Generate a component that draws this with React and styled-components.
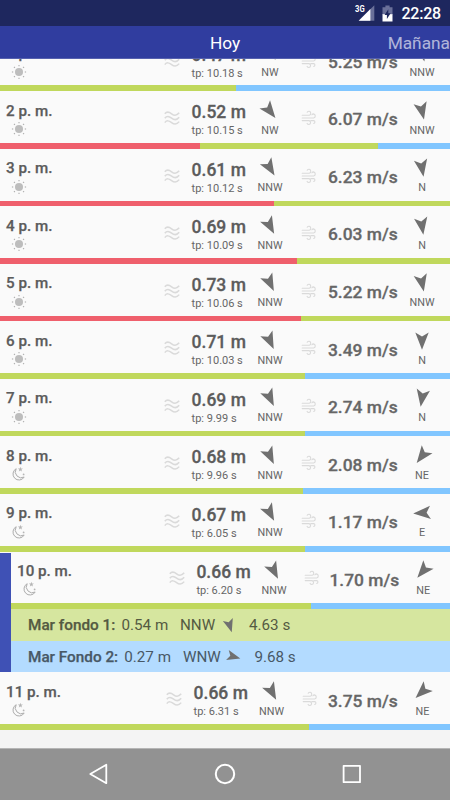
import styled, { createGlobalStyle, css } from "styled-components";

const theme = {
    status: '#1e275e',
    header: '#303d9f',
    select: '#3f51b5',
    row: '#fafafa',
    red: '#ef5f6c',
    green: '#c0d85c',
    blue: '#81c6ff',
    font1: '#5c5c5c',
    font2: '#666666',
    icon: '#bdbdbd',
    iconLight: '#dadada',
}

const GlobalStyle = createGlobalStyle`
* { box-sizing: border-box; }
body {
margin: 0;
font-family: Roboto, "Noto Sans", sans-serif;
background: #f4f4f4;
overflow: hidden;
}
svg { display: block; flex-shrink: 0; }
`
const Screen = styled.div`
width: 450px;
height: 800px;
display: flex;
flex-direction: column;
background: #f4f4f4;
overflow: hidden;
`
const StatusBar = styled.div`
height: 26px;
flex-shrink: 0;
background: ${theme.status};
display: flex;
align-items: center;
justify-content: flex-end;
padding-right: 9px;
color: #ffffff;
`
const Clock = styled.div`
font-size: 16px;
font-weight: 500;
line-height: 26px;
margin: 2px 0 0 8px;
letter-spacing: -0.2px;
`
const Header = styled.div`
height: 32.5px;
flex-shrink: 0;
background: ${theme.header};
border-bottom: 1px solid #5661ae;
display: grid;
grid-template-columns: 177px 96px 177px;
align-items: center;
color: #ffffff;
font-size: 17.3px;
line-height: 28px;
`
const Tab = styled.div`
grid-column: ${props => props.$active ? 2 : 3};
text-align: ${props => props.$active ? 'center' : 'right'};
opacity: ${props => props.$active ? 1 : 0.62};
padding-top: 3px;
white-space: nowrap;
`
const List = styled.div`
flex: 1;
min-height: 0;
overflow: hidden;
`
const FirstOffset = styled.div`
margin-top: -24.9px;
`
const Item = styled.div`
height: 57.55px;
display: flex;
flex-direction: column;
background: ${theme.row};
`
const Cells = styled.div`
flex: 1;
display: grid;
grid-template-columns: ${props => props.$cols};
`
const Col = styled.div`
display: flex;
flex-direction: column;
align-items: ${props => props.$center ? 'center' : 'flex-start'};
padding-top: ${props => props.$top ?? 0}px;
`
const Time = styled.div`
font-size: 15.2px;
font-weight: 500;
-webkit-text-stroke: 0.25px ${theme.font1};
line-height: 18px;
color: ${theme.font1};
white-space: nowrap;
`
const SkyBox = styled.div`
margin: 0.5px 0 0 3.7px;
`
const Height = styled.div`
font-size: 17.5px;
font-weight: 500;
-webkit-text-stroke: 0.3px ${theme.font1};
line-height: 20px;
color: ${theme.font1};
white-space: nowrap;
`
const Period = styled.div`
font-size: 11px;
line-height: 13px;
margin-top: 2px;
color: ${theme.font2};
white-space: nowrap;
`
const Speed = styled.div`
font-size: 17.4px;
font-weight: 500;
-webkit-text-stroke: 0.3px ${theme.font2};
line-height: 20px;
padding-left: 4px;
color: ${theme.font2};
white-space: nowrap;
`
const Direction = styled.div`
font-size: 10.8px;
line-height: 13px;
color: ${theme.font2};
margin-top: 3px;
`
const Bar = styled.div`
display: flex;
height: 5.75px;
flex-shrink: 0;
`
const Segment = styled.div`
background: ${props => theme[props.$color]};
${props => props.$width ? css`width: ${props.$width}px;` : css`flex: 1;`}
`
const Selected = styled.div`
border-left: 11px solid ${theme.select};
margin-top: 1.9px;
`
const SelectedItem = styled(Item)`
height: 55.65px;
`
const Gap = styled.div`
background: ${theme.row};
overflow: hidden;
`
const Swell = styled.div`
height: 31.7px;
display: grid;
grid-template-columns: ${props => props.$cols};
align-items: center;
padding: 1px 0 0 17px;
background: ${props => props.$color};
font-size: 15.3px;
white-space: nowrap;
`
const SwellName = styled.div`
font-weight: 500;
-webkit-text-stroke: 0.25px ${props => props.$color};
color: ${props => props.$color};
`
const SwellText = styled.div`
font-size: 15.2px;
font-weight: 400;
color: ${props => props.$color};
`
const NavBar = styled.div`
height: 52.5px;
flex-shrink: 0;
background: #929292;
border-top: 1px solid #b5b5b5;
display: grid;
grid-template-columns: 127px 127px 127px;
justify-content: center;
align-items: center;
justify-items: center;
`

const Arrow = ({ deg, size = 20 }) => (
    <svg width={size} height={size} viewBox="-10 -10 20 20" overflow="visible">
        <path d="M0 8.8 L-6.7 -8.5 L0 -4.6 L6.7 -8.5 Z" fill="#707070" transform={`rotate(${deg})`} />
    </svg>
)
const Waves = () => (
    <svg width="16" height="14" viewBox="0 0 16 14" fill="none" stroke={theme.iconLight} strokeWidth="1.5">
        {[2.8, 7.2, 11.6].map(y => (
            <path key={y} d={`M0.8 ${y} C2.8 ${y - 2.6} 5 ${y - 2} 7.6 ${y} S12.8 ${y + 2} 15.2 ${y - 1}`} />
        ))}
    </svg>
)
const WindIcon = () => (
    <svg width="16" height="16" viewBox="0 0 16 16" fill="none" stroke={theme.iconLight} strokeWidth="1.1" strokeLinecap="round">
        <path d="M1.2 5.2 H8.2 A2 2 0 0 0 8.2 1.3 Q6.8 1.2 6.2 2.2" />
        <path d="M1.2 8 H12.6 A2.1 2.1 0 0 0 12.6 3.9 Q11.4 3.9 10.9 4.8" />
        <path d="M9.8 10.6 H12.8 A1.5 1.5 0 0 1 12.8 13.5" />
        <path d="M1.2 10.6 H8 A2 2 0 0 1 8 14.5 Q6.6 14.5 6.1 13.4" />
    </svg>
)
const Sun = () => (
    <svg width="18" height="18" viewBox="-9 -9 18 18">
        <circle r="4" fill={theme.icon} />
        {[0, 45, 90, 135, 180, 225, 270, 315].map(a => (
            <path key={a} d="M0 -5.8 V-7.1" stroke="#adadad" strokeWidth="1.1" transform={`rotate(${a})`} />
        ))}
    </svg>
)
const Moon = () => (
    <svg width="18" height="18" viewBox="-9 -9 18 18" fill="none" stroke="#adadad" strokeWidth="1">
        <path d="M-2.8 -5.3 A6 6 0 1 0 5.2 3 A5.95 5.95 0 0 1 -2.8 -5.3 Z" strokeLinejoin="round" />
        <path d="M1.4 -7.2 L2 -5.4 L3.9 -5.4 L2.4 -4.2 L3 -2.4 L1.4 -3.5 L-0.2 -2.4 L0.4 -4.2 L-1.1 -5.4 L0.8 -5.4 Z" fill="#b5b5b5" stroke="none" />
        <circle cx="4.6" cy="0.4" r="0.9" fill="#b5b5b5" stroke="none" />
    </svg>
)
const Signal = styled(({ className }) => (
    <svg className={className} width="20" height="18" viewBox="0 0 20 18">
        <path d="M19.3 1.2 V16.8 H3.7 Z" fill="#6a7099" />
        <path d="M15.4 5.1 V16.8 H3.7 Z" fill="#ffffff" />
        <text x="0" y="8.4" fontSize="8.6" fontWeight="700" fill="#ffffff" textLength="9.6" lengthAdjust="spacingAndGlyphs">3G</text>
    </svg>
))`
margin-right: 7px;
`
const Battery = () => (
    <svg width="11" height="17" viewBox="0 0 11 17">
        <path d="M0.5 2.2 H3.4 V0.6 H7.6 V2.2 H10.5 V10 H0.5 Z" fill="#6a7099" />
        <path d="M0.5 9.2 H10.5 V16.5 H0.5 Z" fill="#ffffff" />
        <path d="M6.3 4.2 L2.6 10 H4.9 V14 L8.6 8.2 H6.3 Z" fill={theme.status} />
    </svg>
)

// grid tracks: time | wave icon | height | direction | wind icon | speed | direction
const cols = {
    normal: '164px 27.6px 53.4px 50px 29px 77px 42px',
    selected: '158px 27.4px 52.6px 50px 26.5px 78px 39.5px',
    last: '166px 27.6px 53px 50px 27.4px 77px 43px',
}

const hours = [
    { time: '1 p. m.', sky: 'sun', h: '0.47 m', tp: '10.18 s', dir: 'NW', deg: -40, speed: '5.25 m/s', wdir: 'NNW', wdeg: -16, bar: [['green', 235.7], ['blue']] },
    { time: '2 p. m.', sky: 'sun', h: '0.52 m', tp: '10.15 s', dir: 'NW', deg: -38, speed: '6.07 m/s', wdir: 'NNW', wdeg: -13, bar: [['red', 200], ['green', 177.6], ['blue']] },
    { time: '3 p. m.', sky: 'sun', h: '0.61 m', tp: '10.12 s', dir: 'NNW', deg: -31, speed: '6.23 m/s', wdir: 'N', wdeg: -10, bar: [['red', 274.2], ['green']] },
    { time: '4 p. m.', sky: 'sun', h: '0.69 m', tp: '10.09 s', dir: 'NNW', deg: -28, speed: '6.03 m/s', wdir: 'N', wdeg: -9, bar: [['red', 296.5], ['green']] },
    { time: '5 p. m.', sky: 'sun', h: '0.73 m', tp: '10.06 s', dir: 'NNW', deg: -26, speed: '5.22 m/s', wdir: 'NNW', wdeg: -12, bar: [['red', 301.3], ['green']] },
    { time: '6 p. m.', sky: 'sun', h: '0.71 m', tp: '10.03 s', dir: 'NNW', deg: -25, speed: '3.49 m/s', wdir: 'N', wdeg: 0, bar: [['green', 305], ['blue']] },
    { time: '7 p. m.', sky: 'sun', h: '0.69 m', tp: '9.99 s', dir: 'NNW', deg: -26, speed: '2.74 m/s', wdir: 'N', wdeg: 9, bar: [['green', 305], ['blue']] },
    { time: '8 p. m.', sky: 'moon', h: '0.68 m', tp: '9.96 s', dir: 'NNW', deg: -26, speed: '2.08 m/s', wdir: 'NE', wdeg: 37, bar: [['green', 303], ['blue']] },
    { time: '9 p. m.', sky: 'moon', h: '0.67 m', tp: '6.05 s', dir: 'NNW', deg: -28, speed: '1.17 m/s', wdir: 'E', wdeg: 86, bar: [['green', 305], ['blue']] },
]
const selectedHour = { time: '10 p. m.', sky: 'moon', h: '0.66 m', tp: '6.20 s', dir: 'NNW', deg: -27, speed: '1.70 m/s', wdir: 'NE', wdeg: 40, bar: [['green', 299.7], ['blue']] }
const lastHour = { time: '11 p. m.', sky: 'moon', h: '0.66 m', tp: '6.31 s', dir: 'NNW', deg: -28, speed: '3.75 m/s', wdir: 'NE', wdeg: 47, bar: [['green', 308.5], ['blue']] }

const swells = [
    { name: 'Mar fondo 1:', h: '0.54 m', dir: 'NNW', deg: -17, tp: '4.63 s', color: '#d6e69f', font: '#545a42', cols: '93.5px 58.5px 42px 27px auto' },
    { name: 'Mar Fondo 2:', h: '0.27 m', dir: 'WNW', deg: -75, tp: '9.68 s', color: '#b3dbff', font: '#485866', cols: '96.3px 58.7px 43.5px 28px auto' },
]

const TimeCol = styled(Col)`
padding-left: 6px;
`

const Hour = ({ item, variant = 'normal', box: Box = Item, top = 0 }) => (
    <Box>
        <Cells $cols={cols[variant]}>
            <TimeCol $top={10.5 + top}>
                <Time>{item.time}</Time>
                <SkyBox>{item.sky === 'sun' ? <Sun /> : <Moon />}</SkyBox>
            </TimeCol>
            <Col $top={19.8 + top}><Waves /></Col>
            <Col $top={11 + top}>
                <Height>{item.h}</Height>
                <Period>tp: {item.tp}</Period>
            </Col>
            <Col $center $top={9.5 + top}>
                <Arrow deg={item.deg} />
                <Direction>{item.dir}</Direction>
            </Col>
            <Col $center $top={19 + top}><WindIcon /></Col>
            <Col $top={18.2 + top}><Speed>{item.speed}</Speed></Col>
            <Col $center $top={9.5 + top}>
                <Arrow deg={item.wdeg} />
                <Direction>{item.wdir}</Direction>
            </Col>
        </Cells>
        <Bar>
            {item.bar.map(([color, width]) => <Segment key={color} $color={color} $width={width} />)}
        </Bar>
    </Box>
)

const App = () => {
    return (
        <>
            <GlobalStyle />
            <Screen>
                <StatusBar>
                    <Signal />
                    <Battery />
                    <Clock>22:28</Clock>
                </StatusBar>
                <Header>
                    <Tab $active>Hoy</Tab>
                    <Tab>Mañana</Tab>
                </Header>
                <List>
                    <FirstOffset>
                        {hours.map(item => <Hour key={item.time} item={item} />)}
                    </FirstOffset>
                    <Gap>
                        <Selected>
                            <Hour item={selectedHour} variant="selected" box={SelectedItem} top={-2} />
                            {swells.map(item => (
                                <Swell key={item.name} $color={item.color} $cols={item.cols}>
                                    <SwellName $color={item.font}>{item.name}</SwellName>
                                    <SwellText $color={item.font}>{item.h}</SwellText>
                                    <SwellText $color={item.font}>{item.dir}</SwellText>
                                    <Arrow deg={item.deg} size={15.5} />
                                    <SwellText $color={item.font}>{item.tp}</SwellText>
                                </Swell>
                            ))}
                        </Selected>
                    </Gap>
                    <Hour item={lastHour} variant="last" />
                </List>
                <NavBar>
                    <svg width="22" height="22" viewBox="0 0 22 22" fill="none" stroke="#fff" strokeWidth="1.8" strokeLinejoin="round"><path d="M19.3 1.8 V20.2 L3.3 11 Z" /></svg>
                    <svg width="22" height="22" viewBox="0 0 22 22" fill="none" stroke="#fff" strokeWidth="2"><circle cx="11" cy="11" r="9.2" /></svg>
                    <svg width="22" height="22" viewBox="0 0 22 22" fill="none" stroke="#fff" strokeWidth="1.8" strokeLinejoin="round"><rect x="2.6" y="2.8" width="16.4" height="16.4" /></svg>
                </NavBar>
            </Screen>
        </>
    )
}
export default App;
